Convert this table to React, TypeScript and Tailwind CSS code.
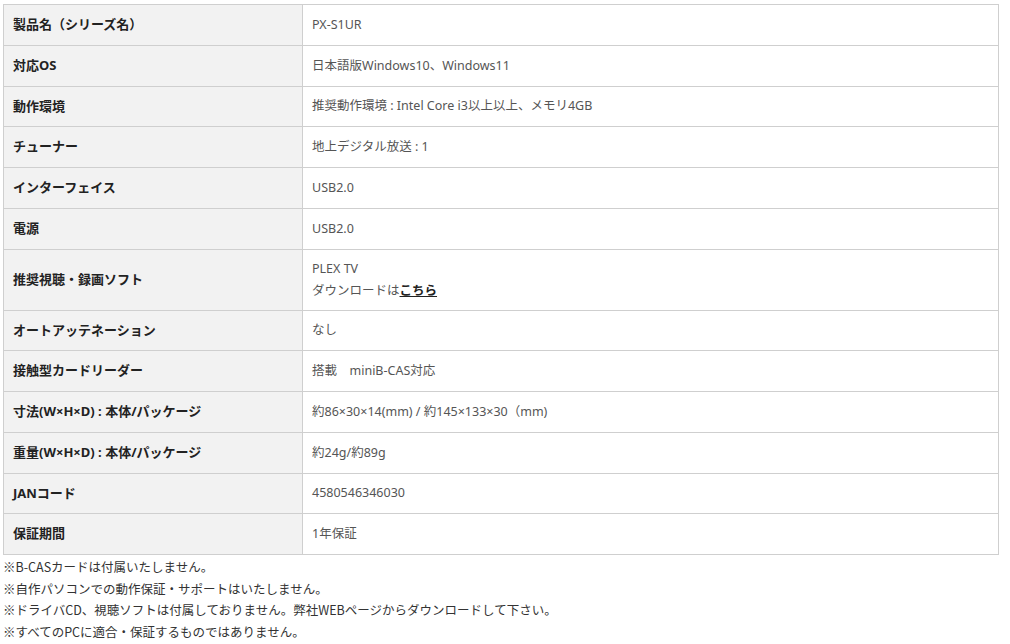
const rows: { label: string; value: React.ReactNode; tall?: boolean }[] = [
  { label: "製品名（シリーズ名）", value: "PX-S1UR" },
  { label: "対応OS", value: "日本語版Windows10、Windows11" },
  { label: "動作環境", value: "推奨動作環境 : Intel Core i3以上以上、メモリ4GB" },
  { label: "チューナー", value: "地上デジタル放送 : 1" },
  { label: "インターフェイス", value: "USB2.0" },
  { label: "電源", value: "USB2.0" },
  {
    label: "推奨視聴・録画ソフト",
    tall: true,
    value: (
      <>
        PLEX TV
        <br />
        ダウンロードは
        <a href="#" className="font-bold text-[#222] underline">
          こちら
        </a>
      </>
    ),
  },
  { label: "オートアッテネーション", value: "なし" },
  { label: "接触型カードリーダー", value: "搭載　miniB-CAS対応" },
  { label: "寸法(W×H×D) : 本体/パッケージ", value: "約86×30×14(mm) / 約145×133×30（mm)" },
  { label: "重量(W×H×D) : 本体/パッケージ", value: "約24g/約89g" },
  { label: "JANコード", value: "4580546346030" },
  { label: "保証期間", value: "1年保証" },
];

const notes = [
  "※B-CASカードは付属いたしません。",
  "※自作パソコンでの動作保証・サポートはいたしません。",
  "※ドライバCD、視聴ソフトは付属しておりません。弊社WEBページからダウンロードして下さい。",
  "※すべてのPCに適合・保証するものではありません。",
];

export default function App() {
  return (
    <div className="h-[644px] w-[1010px] bg-white pl-[3px] pt-[4px] font-['Noto_Sans','Noto_Sans_CJK_JP',sans-serif]">
      <table className="w-[996px] border-collapse border border-[#cfcfcf]">
        <tbody>
          {rows.map((r) => (
            <tr key={r.label} className={r.tall ? "h-[61px]" : "h-[40.75px]"}>
              <th className="w-[299px] border border-[#cfcfcf] bg-[#f2f2f2] px-[9px] py-0 text-left align-middle text-[13px] font-bold text-[#222]">
                {r.label}
              </th>
              <td className="border border-[#cfcfcf] px-[9px] py-0 align-middle text-[12.5px] leading-[22px] text-[#555]">
                {r.value}
              </td>
            </tr>
          ))}
        </tbody>
      </table>
      <div className="mt-px font-['Noto_Sans_CJK_JP',sans-serif] text-[12.5px] leading-[21.5px] text-[#333]">
        {notes.map((n) => (
          <p key={n}>{n}</p>
        ))}
      </div>
    </div>
  );
}
